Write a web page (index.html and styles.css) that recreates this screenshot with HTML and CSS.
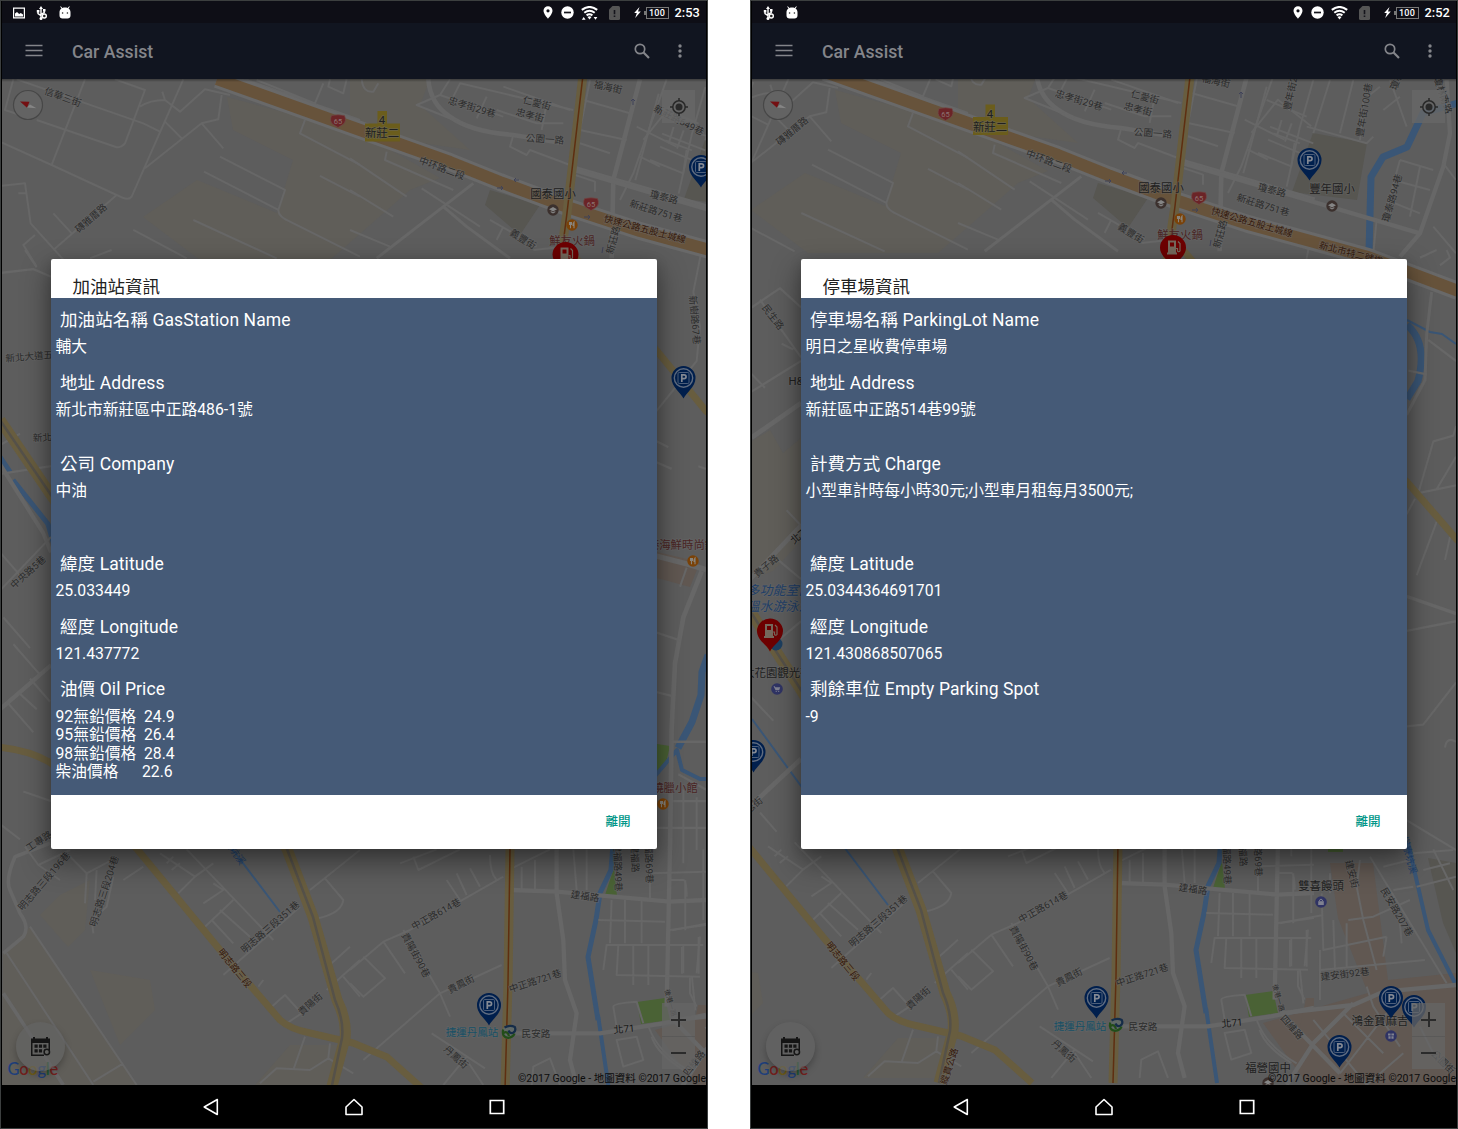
FILE: index.html
```html
<!DOCTYPE html>
<html lang="zh-Hant">
<head>
<meta charset="utf-8">
<title>Car Assist</title>
<link rel="stylesheet" href="styles.css">
</head>
<body>
<svg class="sprites" aria-hidden="true">
  <symbol id="i-image" viewBox="0 0 12 12"><path fill="#fff" fill-rule="evenodd" d="M0 .5h12v11H0zM1.2 1.7v8.6h9.6V1.7zM2 9.6V6.6l2-1.6 2.2 2 1.6-.9 2.2 1.4v2.1z"/></symbol>
  <symbol id="i-usb" viewBox="0 0 12 14"><g fill="none" stroke="#fff" stroke-width="1.4"><path d="M5 2v10M2 5.5v2.2l3 2M8.2 4v2.6L5 8.4"/><circle cx="8.3" cy="10" r="2" fill="#222"/></g><path fill="#fff" d="M5 0l2 3H3zM.8 4h2.6v2.4H.8zM7 3h2.5v2.4H7z"/><circle cx="5" cy="12.4" r="1.5" fill="#fff"/></symbol>
  <symbol id="i-android" viewBox="0 0 12 13"><path fill="#fff" d="M1.8.2l1.6 1.7C4.200 1.500 5 1.400 6 1.400s1.800.1 2.600.5L10.200.2l.6.5-1.300 1.800C11 3.400 11.500 4.700 11.500 6.500v3c0 1.800-1.200 3-3 3h-5c-1.800 0-3-1.200-3-3v-3c0-1.800.5-3.100 2-4L1.200.7z"/><circle cx="3.600" cy="7" r=".8" fill="#222"/><circle cx="8.400" cy="7" r=".8" fill="#222"/></symbol>
  <symbol id="i-place" viewBox="0 0 10 13"><path fill="#fff" fill-rule="evenodd" d="M5 .3A4.500 4.500 0 0 0 .5 4.800C.5 8 5 12.700 5 12.700S9.500 8 9.500 4.800A4.500 4.500 0 0 0 5 .3zM5 3.200a1.600 1.600 0 1 1 0 3.200 1.600 1.600 0 0 1 0-3.200z"/></symbol>
  <symbol id="i-dnd" viewBox="0 0 13 13"><circle cx="6.500" cy="6.500" r="6.200" fill="#fff"/><path d="M3 6.500h7" stroke="#15151c" stroke-width="1.700"/></symbol>
  <symbol id="i-wifi" viewBox="0 0 17 14"><g fill="none" stroke="#fff" stroke-width="2"><path d="M.8 3.900Q8.500-2 16.200 3.900M3.300 6.800Q8.500 2.600 13.700 6.800M5.600 9.400Q8.500 7.200 11.400 9.400"/></g><path fill="#fff" d="M6.500 11q2-1.500 4 0l-2 2.500z"/></symbol>
  <symbol id="i-traffic" viewBox="0 0 17 4"><path fill="#fff" d="M.8 3.800L2.700 1l1.900 2.800zM12.600 1h3.800l-1.900 2.800z"/></symbol>
  <symbol id="i-sim" viewBox="0 0 11 14"><path fill="#555" d="M3.500 0H9.500Q11 0 11 1.500V12.500Q11 14 9.500 14h-8Q0 14 0 12.500V3.500z"/><path stroke="#15151c" stroke-width="1.600" d="M5.500 4v4.200M5.500 9.500v1.600"/></symbol>
  <symbol id="i-bolt" viewBox="0 0 7 11"><path fill="#fff" d="M5.500 0L.2 6h2.600L1.200 11 6.800 4.600H4z"/></symbol>
  <symbol id="i-menu" viewBox="0 0 18 14"><path stroke="#84858a" stroke-width="1.500" d="M.5 1.500h17M.5 6.500h17M.5 11.500h17"/></symbol>
  <symbol id="i-search" viewBox="0 0 16 16"><circle cx="6" cy="6" r="4.700" fill="none" stroke="#84858a" stroke-width="1.700"/><path stroke="#84858a" stroke-width="2.200" d="M9.300 9.300l5.700 5.700"/></symbol>
  <symbol id="i-more" viewBox="0 0 4 16"><g fill="#84858a"><circle cx="2" cy="3" r="1.700"/><circle cx="2" cy="8" r="1.700"/><circle cx="2" cy="13" r="1.700"/></g></symbol>
  <symbol id="i-back" viewBox="0 0 20 20"><path fill="none" stroke="#fff" stroke-width="1.600" stroke-linejoin="round" d="M16.300 2.500v15L3.200 10z"/></symbol>
  <symbol id="i-home" viewBox="0 0 20 20"><path fill="none" stroke="#fff" stroke-width="1.600" stroke-linejoin="round" d="M2 17.500V10l8-7.500 8 7.500v7.500z"/></symbol>
  <symbol id="i-recent" viewBox="0 0 20 20"><path fill="none" stroke="#fff" stroke-width="1.700" d="M3.300 3.500h13.400v13H3.300z"/></symbol>
  <symbol id="i-compass" viewBox="0 0 32 32"><circle cx="16" cy="16" r="14.500" fill="#636363" stroke="#474747" stroke-width="1.200"/><path fill="#740f12" d="M8 12.500l9.500.2-2.500 6z"/><path fill="#858585" d="M15 18.500l3-3 6.500 3.800z"/></symbol>
  <symbol id="i-locate" viewBox="0 0 20 20"><circle cx="10" cy="10" r="6.200" fill="none" stroke="#292929" stroke-width="1.500"/><circle cx="10" cy="10" r="3.500" fill="#292929"/><path stroke="#292929" stroke-width="1.500" d="M10 1v3M10 16v3M1 10h3M16 10h3"/></symbol>
  <symbol id="i-calendar" viewBox="0 0 20 19"><path fill="#151515" fill-rule="evenodd" d="M0 1.500h2V0h2v1.500h11V0h2v1.500h2V13h-1.500V6h-16v11.500H13V19H0z"/><path fill="#151515" d="M3.500 7.500h3.200v3.200H3.500zM7.900 7.500h3.200v3.200H7.900zM12.300 7.500h3.200v3.200h-3.200zM3.500 12.200h3.200v3.200H3.500zM7.900 12.200h3.200v3.200H7.900z"/><circle cx="15.800" cy="15" r="2.700" fill="none" stroke="#151515" stroke-width="1.500"/></symbol>

  <symbol id="pin-parking" viewBox="-13 -13 26 34" overflow="visible"><path fill="#001f4d" d="M0 20.500C-2.500 15-12 9-12 0A12 12 0 0 1 12 0C12 9 2.500 15 0 20.500z"/><circle r="9.200" fill="none" stroke="#5f6c80" stroke-width="1.400"/><rect x="-5.500" y="-5.500" width="11" height="11" rx="1.200" fill="#00204e" stroke="#566680" stroke-width=".9"/><path fill="none" stroke="#858a94" stroke-width="1.700" d="M-1.700 4V-3.200H.6a1.900 1.900 0 0 1 0 3.900H-1.700"/></symbol>
  <symbol id="pin-gas" viewBox="-13 -13 26 34" overflow="visible"><path fill="#6d0000" d="M0 20.500C-2.500 14-13 9.500-13 0A13 12.500 0 0 1 13 0C13 9.500 2.500 14 0 20.500z"/><path fill="#75695c" fill-rule="evenodd" d="M-5-7H3V5h1v2H-6V5h1zM-3-5v4H1v-4z"/><path fill="none" stroke="#75695c" stroke-width="1.200" d="M3 1h1.500v2.500q1.500 1.500 2.500 0V-4L5-6"/></symbol>
  <symbol id="poi-food" viewBox="-6 -6 12 12" overflow="visible"><circle r="5.700" fill="#7a4208"/><path fill="none" stroke="#89857d" stroke-width="1.100" d="M-2.500-3v2.500h2V-3M-1.500-3v6.200M2 3.200V-3Q.8-1.500 1 .5h1"/></symbol>
  <symbol id="poi-school" viewBox="-6 -6 12 12" overflow="visible"><circle r="5.700" fill="#3b302d"/><path fill="#858585" d="M-4-.8L0-3l4 2.200L0 1.400zM-2.300 1L0 2.200 2.300 1v1.300L0 3.400-2.300 2.300z"/></symbol>
  <symbol id="poi-shop" viewBox="-6 -6 12 12" overflow="visible"><circle r="5.800" fill="#2f3364"/><path fill="#7f8190" d="M-2.800-.8h5.600V3h-5.600z"/><path fill="none" stroke="#7f8190" d="M-1.400-1v-1q1.400-1.800 2.800 0v1"/></symbol>
  <symbol id="poi-cart" viewBox="-6 -6 12 12" overflow="visible"><circle r="5.800" fill="#2f3364"/><path fill="#7f8190" d="M-3.500-2.800h1.400l.4 1h4.900L2.200 1.300h-3.600zM-1.300 2h1v1h-1zM1.200 2h1v1h-1z"/></symbol>
  <symbol id="poi-gift" viewBox="-6 -6 12 12" overflow="visible"><circle r="5.800" fill="#2f3364"/><path fill="#7f8190" d="M-3-2.600h2.600v2H-3zM.4-2.600H3v2H.4zM-2.600.2h2.200v2.600h-2.200zM.4.2h2.200v2.600H.4z"/></symbol>
  <symbol id="poi-metro" viewBox="-8 -8 16 16" overflow="visible"><ellipse rx="7.300" ry="6.600" fill="#5f6866" transform="rotate(-25)"/><path fill="none" stroke="#224d19" stroke-width="2.200" d="M-5.800-2.500Q-7.500 5-1 5.800 4 5.500 5.500 1.500M-5.500 1Q-1.500-1.500 0 4"/><path fill="none" stroke="#152c48" stroke-width="2.200" d="M-4.500-4.500Q1-7.500 5.800-5 7.500-1 4 .8 1 2-.5-1.500"/></symbol>
  <symbol id="shield" viewBox="-8 -7 16 14" overflow="visible"><path fill="#6b2427" stroke="#704b48" stroke-width=".7" d="M-6.500-5.500Q0-7 6.500-5.500 9 0 5 3.500L0 6.500-5 3.500Q-9 0-6.500-5.500z"/></symbol>

  <symbol id="streets" viewBox="0 0 850 1100" overflow="visible">
    <rect width="850" height="1100" fill="#5d5d5d"/>
    <g fill="#605e59">
      <path d="M227 97L360 133 440 178 410 190 330 260H200L143 217 197 180 277 213 293 160 233 130z"/>
      <path d="M350 79H430L420 105 470 150 400 140 350 120z"/>
      <path d="M3 953L30 927 137 1085H2zM60 895L90 880 85 930 68 947 40 915zM90 970L150 980 155 1010 120 1045z"/>
      <path d="M144 448L162 437 175 460 193 445V548L165 578 144 586zM290 1045L340 1045 330 1085H255z"/>
    </g>
    <g fill="#575651">
      <path d="M705 140L759 150 749 207 684 199zM490 190L540 205 520 235 485 205z"/>
      <path d="M820 865L848 870V960L835 930z"/>
    </g>
    <g fill="#615852">
      <path d="M657 552L700 562 690 587 657 578zM722 870L765 870 780 987 848 980V1092H700L655 1030 760 1000 730 925z"/>
      <path d="M698 1005H706V1040L690 1045z"/>
    </g>
    <g fill="#4a6235"><path d="M637 1002L665 998 670 1020 641 1024zM605 895L614 868 617 896zM657 744L670 746 665 767 657 774zM720 852H735V859H720z"/></g>
    <g fill="none" stroke="#3a5676" stroke-linejoin="round">
      <path stroke-width="5" d="M0 457L10 472M13 480L48 524 56 552M613 845L611 870 600 893 596 920 588 957 598 1020"/>
      <path stroke-width="4" d="M598 1015L609 1090M655 776L677 750 682 770 700 779 708 779M800 850L820 937 847 990"/>
      <path stroke-width="2" d="M144 726L193 793 233 850 280 912M799 327L822 339 834 341 848 351"/>
      <path stroke-width="7" d="M850 110L815 120 799 154 775 164 763 184 761 259M708 655L702 672 701 695 692 722 678 748M799 332Q820 350 810 388L799 406"/>
    </g>
    <g fill="none" stroke="#676767" stroke-width="6" stroke-linejoin="round">
      <g transform="scale(.3333)">
        <path d="M40 238L15 330 60 345M50 238L430 370 480 395M255 238L155 495M0 425L155 495 350 585Q385 605 395 590L550 238M110 360L350 442Q365 442 375 430L435 270 345 238M420 320Q450 300 495 300L540 335 615 268 690 285M487 275L495 300M665 285L655 358 605 370 435 505M605 370L670 445M495 365L545 415M0 558L75 550 92 670 200 790M160 750L350 585M160 640L215 700M105 705L70 735 110 800M55 580H80M270 775L335 750"/>
        <path d="M660 470L855 570 835 630Q835 650 870 665L1080 770M612 515L835 630M580 660L830 775M400 690L560 775M960 528L1080 590M915 360L900 400 1080 495M770 240L945 310 970 250M735 238L1080 360M990 238L985 260 1030 280 1040 238"/>
      </g>
      <g transform="translate(350) scale(.3333)">
        <path stroke-width="14" d="M235 238Q240 310 300 350 360 395 490 405L640 430M660 500L1070 620M870 238L790 540 785 775"/>
        <path d="M270 285L200 315 350 375M270 285L300 238M270 285L460 350M380 355L410 290M460 260L660 330M440 330L560 370 640 370M575 390L590 310M490 405L480 440 530 465 540 450 660 495M690 430L780 460M720 240L690 390 830 420M700 300L840 340M950 238L850 520 810 600M900 480L1000 520 1010 450M930 440L1050 490M870 470L930 500M880 420L960 320 1060 400M860 380L980 440M310 290L330 250 670 330M35 238Q40 280 70 275L85 250M0 475L170 590M110 455L105 480 310 570M420 660L560 740M440 720L460 680M0 570L130 650M0 690L120 740M215 565L390 680M660 520L735 545V575M550 750L640 740"/>
        <path stroke-width="9" d="M370 550L280 620 80 775M280 620L350 680 480 775"/>
      </g>
      <g transform="translate(492 7) scale(.3333)">
        <path stroke-width="13" d="M250 490L960 700M1040 240L1050 400 1030 500 960 700 900 770"/>
        <path d="M430 520L500 260M500 300L620 350M520 400L600 430M510 380L640 430M620 380L800 430 820 410M640 240L600 380 560 560M690 240L640 400M760 240L720 400M840 260L790 300 780 420M900 480L850 660M900 480L1000 510M880 540L990 570M860 600L960 640M960 500L930 650M1030 490L1068 540M830 660L820 760M870 240L920 380M900 290L850 330M545 360L530 410M575 370L555 425M1000 680L1068 760"/>
      </g>
      <g transform="translate(0 840) scale(.3333)">
        <path stroke-width="11" d="M10 340L70 290Q90 260 60 220L30 150Q15 120 45 50L150 10M10 460L190 735"/>
        <path d="M20 340L280 735M90 260L410 735M280 725L370 670M200 40L260 100 255 190M260 100L345 55M290 90L285 180M370 120L430 80M340 110L320 200 275 240 280 280M115 75L180 120M75 20L115 75 210 30M560 28L820 300M480 40L585 110 535 160M585 110L640 70M640 130L670 150 610 190M700 180L615 260M660 210L750 290M635 240L700 310M670 405L900 200M775 440L790 420M815 500L855 465 905 520 860 550M930 150L1080 30M975 115L1030 180Q1025 220 955 235M995 370L1050 320M980 450L1080 360M1030 410L1080 470M915 590L880 690M780 730L830 685 930 690 985 655 990 610M985 655L1060 700M500 70L520 50M515 90L540 70"/>
      </g>
      <g transform="translate(350 840) scale(.3333)">
        <path stroke-width="13" d="M485 150L620 155 960 185 1068 180M620 28L620 160 640 300 645 420 680 520 660 660 680 735M485 580L750 580 940 550 1068 525M960 28L950 500"/>
        <path d="M0 390L100 305 180 270 460 110M150 70L260 28M190 50L205 90 330 28M290 120L330 180M320 100L350 165M360 85L390 140M420 45Q420 100 440 120M485 85L600 28M515 80V150M555 60V150M100 305L165 400M40 350L105 415 40 470 0 430M160 270L270 460 300 530M455 375L270 460 40 660M245 580L405 685M350 650L280 735M350 660L400 735M745 240L945 245M785 180L780 310M825 180V310M875 180V310M760 390L770 315 1060 315M805 315L800 405 1050 410M850 315V435M895 315V435M960 270L1068 255M1000 315V400M1050 290L1040 400M1020 410L1020 460 1040 500M900 100L1068 95M900 28V180M960 120H1000Q1010 120 1010 170M1060 28V240M790 500Q790 490 860 485L880 550M790 500L800 560M800 600L860 590 880 660 820 680ZM545 735L550 680 600 655 630 735M905 590Q920 640 1000 690M670 28L680 150M710 28V150M1000 70V28"/>
      </g>
      <g transform="translate(492 847) scale(.3333)">
        <path stroke-width="13" d="M540 520L760 495 850 455 1068 435M760 490L640 610 560 735M545 520L720 700"/>
        <path d="M665 160L670 330 860 290M540 250L670 225M745 240L820 230 930 180M700 240L705 390M740 250V380M780 60L770 140 790 240 830 390M660 390L975 360M810 50L1040 430M850 80L930 60M470 540Q500 620 590 670M600 390L610 490M660 330V480M800 440L820 500 900 620M730 520L850 640M860 520L720 700M640 540L800 735M910 640L800 735M960 560L1000 640M860 290L850 350M900 250L905 310M1068 110L950 140M1000 28L1060 150M940 40L1060 30M970 90L1050 70M880 150L940 140M690 100V160M580 100V250M620 270V380M570 300V380"/>
      </g>
      <g transform="translate(42 257) scale(.3333 .3827)">
        <path stroke-width="13" d="M305 490L453 400M300 860L453 720M305 1450L453 1330"/>
        <path d="M305 150L390 100 453 150M305 370L453 290M330 130L453 280M300 320L345 360M395 245L430 260M305 1170L370 1230M330 1470L380 1520M410 680L453 720M385 810L453 860M385 1020L453 970"/>
      </g>
      <g transform="translate(792 257) scale(.3333 .3827)">
        <path stroke-width="9" d="M95 110L80 220 75 340 20 430M20 905L168 950"/>
        <path d="M85 235L168 290M55 635L100 500 160 485 168 460M55 635L168 615M110 625L168 540M45 650L20 690M110 710L50 850M150 750L135 810M20 995L168 970M20 1245L70 1240 168 1130M135 1300Q140 1270 168 1285M20 1490L168 1568M25 315L80 325M60 20L110 0M120 40L150 20 140 0"/>
      </g>
      <g transform="translate(0 250) scale(.3333 .3827)">
        <path stroke-width="12" d="M0 1200L153 1085M0 560L130 740 153 790"/>
        <path d="M0 60L100 50 153 70M75 0L110 45M0 510L60 480M0 585L153 565M0 790L60 850M10 960L90 1040M0 890L153 750M40 1030L120 1110M20 1180L100 1260M60 1160L110 1200M70 1415L153 1440M0 1500L60 1540M90 1120L150 1180"/>
      </g>
      <g transform="translate(650 250) scale(.3333 .3827)">
        <path stroke-width="14" d="M20 800L110 820 168 835M155 840L100 960 75 1080 65 1250 60 1568"/>
        <path d="M155 0L130 110 150 200 140 290 20 420M20 500L55 515M20 555L65 572M145 565L168 572M90 880L110 830M20 1000L90 1020M20 1155L65 1165M65 1285H168M85 1370L168 1410M70 1440H168M140 1430V1568M100 1410V1568M20 1510H168"/>
      </g>
    </g>
    <g fill="none" stroke-linejoin="round">
      <path stroke="#696969" stroke-width="18" d="M217 79L360 130 450 162 500 182 567 207 640 231 706 249 760 264 850 298"/>
      <path stroke="#67533b" stroke-width="12" d="M217 79L360 130 450 162 500 182 567 207 640 231 706 249 760 264 850 298"/>
      <g stroke="#685d3f">
        <path stroke-width="7" d="M560 240L657 351 706 411 799 489 850 548M-2 747Q30 750 51 763L137 849 220 950 280 1020Q290 1029 310 1033L353 1043 387 1057 424 1090"/>
        <path stroke-width="11" d="M0 420L51 495 144 621 193 697 287 849 313 917 337 1000Q347 1020 345 1038L331 1090"/>
        <path stroke-width="9" d="M583 75L567 213 560 260 515 700 510 849 508 983 505 1090"/>
      </g>
      <path stroke="#555149" stroke-width="2.500" d="M0 420L51 495 144 621 193 697 287 849 313 917 335 1000Q344 1020 342 1038L331 1090"/>
      <path stroke="#5e2e10" stroke-width="1.500" d="M583 75L567 213 561 260 515 700 510 849 508 983 505 1090"/>
    </g>
    <g fill="none" stroke="#3f4259" stroke-width="1"><path d="M514 180h5m-5 0l2-2m-2 2l2 2M497 188h6m-2-2l2 2-2 2M584 217h6m-2-2l2 2-2 2M633 105v-6m-2 2l2-2 2 2M602 253l1-6"/></g>
  </symbol>
</svg>

<main class="board">
  <section class="phone">
    <header class="status">
      <div class="notices"><svg class="n-image"><use href="#i-image"/></svg><svg class="n-usb"><use href="#i-usb"/></svg><svg class="n-android"><use href="#i-android"/></svg></div>
      <div class="system"><svg class="s-place"><use href="#i-place"/></svg><svg class="s-dnd"><use href="#i-dnd"/></svg><span class="s-wifi"><svg><use href="#i-wifi"/></svg><svg class="traffic"><use href="#i-traffic"/></svg></span><svg class="s-sim"><use href="#i-sim"/></svg><svg class="s-bolt"><use href="#i-bolt"/></svg><span class="battery">100</span><span class="clock">2:53</span></div>
    </header>
    <nav class="toolbar"><svg class="t-menu"><use href="#i-menu"/></svg><h1>Car Assist</h1><svg class="t-search"><use href="#i-search"/></svg><svg class="t-more"><use href="#i-more"/></svg></nav>
    <div class="stage">
      <svg class="map" viewBox="2 79 704 1006">
        <use href="#streets" width="850" height="1100"/>
        <path fill="#6b5d1c" d="M377.500 111h9.500v13h-9.500zM365 123.500h35v18h-35z"/>
        <use href="#shield" x="330" y="114" width="16" height="14"/><use href="#shield" x="583" y="197" width="16" height="14"/>
        <g class="street">
          <text transform="translate(63 97) rotate(20)">信華三街</text>
          <text transform="translate(91 218) rotate(-41)">磚雅厝路</text>
          <text transform="translate(472 107) rotate(17)">忠孝街29巷</text>
          <text transform="translate(537 103) rotate(15)">仁愛街</text>
          <text transform="translate(530 115) rotate(15)">忠孝街</text>
          <text transform="translate(545 139) rotate(4)">公園一路</text>
          <text transform="translate(608 87) rotate(12)">福海街</text>
          <text transform="translate(679 120) rotate(27)">新莊路649巷</text>
          <text transform="translate(442 168) rotate(20)">中环路二段</text>
          <text transform="translate(523 239) rotate(32)">義豐街</text>
          <text transform="translate(664 197) rotate(15)">瓊泰路</text>
          <text transform="translate(656 211) rotate(17)">新莊路751巷</text>
          <text transform="translate(613 240) rotate(-75)">新莊路</text>
          <text transform="translate(695 320) rotate(85)">新樹路67巷</text>
          <text transform="translate(34 356) rotate(-5)">新北大道五段</text>
          <text transform="translate(52 437) rotate(-3)">新北大道</text>
          <text transform="translate(28 572) rotate(-42)">中央路5巷</text>
          <text transform="translate(39 841) rotate(-33)">工專路</text>
          <text transform="translate(44 881) rotate(-49)">明志路三段196巷</text>
          <text transform="translate(104 891) rotate(-72)">明志路三段204巷</text>
          <text transform="translate(270 927) rotate(-41)">明志路三段351巷</text>
          <text transform="translate(310 1004) rotate(-42)">貴陽街</text>
          <text transform="translate(436 914) rotate(-29)">中正路614巷</text>
          <text transform="translate(416 955) rotate(62)">貴陽街90巷</text>
          <text transform="translate(461 984) rotate(-27)">貴鳳街</text>
          <text transform="translate(535 981) rotate(-18)">中正路721巷</text>
          <text transform="translate(536 1033)">民安路</text>
          <text transform="translate(456 1057) rotate(42)">丹鳳街</text>
          <text transform="translate(585 896) rotate(8)">建福路</text>
          <text transform="translate(618 867) rotate(88)">建福路49巷</text>
          <text transform="translate(635 858) rotate(88)">建福路</text>
          <text transform="translate(649 859) rotate(88)">建福路69巷</text>
          <text transform="translate(670 1003) rotate(75)" class="tiny">後港一路</text>
          <text transform="translate(694 1063) rotate(-52)">四維路</text>
          <text transform="translate(624 1029) rotate(-5)" class="dark">北71</text>
          <text transform="translate(645 229) rotate(15)" class="brown">快速公路五股土城線</text>
          <text transform="translate(235 968) rotate(51)" class="brown">明志路三段</text>
          <text transform="translate(232 848) rotate(55)" class="water">大窠坑溪</text>
        </g>
        <g class="place">
          <text x="553" y="194">國泰國小</text>
          <text x="572" y="241" class="red">鮮友火鍋</text>
          <text x="682" y="545" class="red">港海鮮時尚鍋</text>
          <text x="675" y="788" class="red">燒臘小館</text>
          <text x="472" y="1032" class="metro">捷運丹鳳站</text>
          <text x="382" y="120">4</text><text x="382" y="133">新莊二</text>
          <text x="338" y="121" class="route">65</text><text x="591" y="204" class="route">65</text>
        </g>
        <use href="#poi-school" x="547" y="204" width="12" height="12"/>
        <use href="#poi-food" x="566" y="219" width="12" height="12"/>
        <use href="#poi-food" x="687" y="555" width="12" height="12"/>
        <use href="#poi-food" x="657" y="798" width="12" height="12"/>
        <use href="#poi-metro" x="501" y="1024" width="16" height="16"/>
        <use href="#pin-parking" x="688" y="154" width="26" height="34"/>
        <use href="#pin-parking" x="670.500" y="365" width="26" height="34"/>
        <use href="#pin-parking" x="476" y="992" width="26" height="34"/>
        <use href="#pin-gas" x="552.500" y="241.500" width="26" height="34"/>
      </svg>
      <svg class="compass"><use href="#i-compass"/></svg>
      <div class="locate"><svg><use href="#i-locate"/></svg></div>
      <div class="google"><b>G</b><b>o</b><b>o</b><b>g</b><b>l</b><b>e</b></div>
      <div class="fab"><svg><use href="#i-calendar"/></svg></div>
      <div class="zoom"><span class="plus"></span><span class="minus"></span></div>
      <p class="credit">©2017 Google - 地圖資料 ©2017 Google</p>
      <article class="dialog">
        <h2>加油站資訊</h2>
        <dl>
          <div><dt>加油站名稱 GasStation Name</dt><dd>輔大</dd></div>
          <div><dt>地址 Address</dt><dd class="two">新北市新莊區中正路486-1號</dd></div>
          <div><dt>公司 Company</dt><dd class="three">中油</dd></div>
          <div><dt>緯度 Latitude</dt><dd>25.033449</dd></div>
          <div><dt>經度 Longitude</dt><dd>121.437772</dd></div>
          <div><dt>油價 Oil Price</dt><dd>92無鉛價格  24.9
95無鉛價格  26.4
98無鉛價格  28.4
柴油價格      22.6</dd></div>
        </dl>
        <footer><button>離開</button></footer>
      </article>
    </div>
    <footer class="keys"><svg><use href="#i-back"/></svg><svg><use href="#i-home"/></svg><svg><use href="#i-recent"/></svg></footer>
  </section>

  <section class="phone">
    <header class="status">
      <div class="notices"><svg class="n-usb"><use href="#i-usb"/></svg><svg class="n-android"><use href="#i-android"/></svg></div>
      <div class="system"><svg class="s-place"><use href="#i-place"/></svg><svg class="s-dnd"><use href="#i-dnd"/></svg><span class="s-wifi"><svg><use href="#i-wifi"/></svg></span><svg class="s-sim"><use href="#i-sim"/></svg><svg class="s-bolt"><use href="#i-bolt"/></svg><span class="battery">100</span><span class="clock">2:52</span></div>
    </header>
    <nav class="toolbar"><svg class="t-menu"><use href="#i-menu"/></svg><h1>Car Assist</h1><svg class="t-search"><use href="#i-search"/></svg><svg class="t-more"><use href="#i-more"/></svg></nav>
    <div class="stage">
      <svg class="map" viewBox="752 79 704 1006">
        <use href="#streets" x="608" y="-7" width="850" height="1100"/>
        <path fill="#6b5d1c" d="M985.500 104.500h9.500v13h-9.500zM973 117h35v18h-35z"/>
        <use href="#shield" x="937.500" y="107" width="16" height="14"/><use href="#shield" x="1191" y="191" width="16" height="14"/>
        <g class="street">
          <text transform="translate(792 131) rotate(-40)">磚雅厝路</text>
          <text transform="translate(1079 100) rotate(17)">忠孝街29巷</text>
          <text transform="translate(1145 97) rotate(15)">仁愛街</text>
          <text transform="translate(1138 109) rotate(15)">忠孝街</text>
          <text transform="translate(1153 133) rotate(4)">公園一路</text>
          <text transform="translate(1216 81) rotate(12)">福海街</text>
          <text transform="translate(1049 161) rotate(20)">中环路二段</text>
          <text transform="translate(1291 91) rotate(-78)">豐年街28</text>
          <text transform="translate(1364 110) rotate(-80)">豐年街100巷</text>
          <text transform="translate(1398 76) rotate(-70)">瓊林路</text>
          <text transform="translate(1443 95) rotate(72)">瓊林南路</text>
          <text transform="translate(1131 233) rotate(32)">義豐街</text>
          <text transform="translate(1272 190) rotate(15)">瓊泰路</text>
          <text transform="translate(1263 205) rotate(17)">新莊路751巷</text>
          <text transform="translate(1220 234) rotate(-75)">新莊路</text>
          <text transform="translate(1392 198) rotate(-74)">瓊泰路94巷</text>
          <text transform="translate(773 317) rotate(52)">民生路</text>
          <text transform="translate(766 566) rotate(-40)">貴子路</text>
          <text transform="translate(750 808) rotate(-40)">明志街</text>
          <text transform="translate(878 921) rotate(-41)">明志路三段351巷</text>
          <text transform="translate(918 998) rotate(-42)">貴陽街</text>
          <text transform="translate(1043 907) rotate(-29)">中正路614巷</text>
          <text transform="translate(1024 948) rotate(62)">貴陽街90巷</text>
          <text transform="translate(1069 977) rotate(-27)">貴鳳街</text>
          <text transform="translate(1142 975) rotate(-18)">中正路721巷</text>
          <text transform="translate(1143 1026)">民安路</text>
          <text transform="translate(1064 1051) rotate(42)">丹鳳街</text>
          <text transform="translate(1193 889) rotate(8)">建福路</text>
          <text transform="translate(1227 860) rotate(88)">建福路49巷</text>
          <text transform="translate(1243 852) rotate(88)">建福路</text>
          <text transform="translate(1258 852) rotate(88)">建福路69巷</text>
          <text transform="translate(1352 874) rotate(75)">建安街</text>
          <text transform="translate(1397 912) rotate(60)">民安路207巷</text>
          <text transform="translate(1345 974) rotate(-7)">建安街92巷</text>
          <text transform="translate(1292 1027) rotate(48)">四維路</text>
          <text transform="translate(1278 998) rotate(75)" class="tiny">後港一路</text>
          <text transform="translate(1443 1062) rotate(45)">公園街</text>
          <text transform="translate(1232 1023) rotate(-5)" class="dark">北71</text>
          <text transform="translate(800 535) rotate(-40)" class="dark">北71</text>
          <text transform="translate(1252 222) rotate(16)" class="brown">快速公路五股土城線</text>
          <text transform="translate(1351 253) rotate(15)" class="brown">新北市特二號道</text>
          <text transform="translate(843 961) rotate(51)" class="brown">明志路三段</text>
          <text transform="translate(949 1066) rotate(-72)" class="brown">縱貫公路</text>
          <text transform="translate(1409 855) rotate(75)" class="water">塔寮坑溪</text>
        </g>
        <g class="place">
          <text x="1161" y="188">國泰國小</text>
          <text x="1332" y="189">豐年國小</text>
          <text x="1180" y="235" class="red">鮮友火鍋</text>
          <text x="801" y="381">H&amp;M</text>
          <text x="779" y="590" class="pool">多功能室內</text>
          <text x="779" y="606" class="pool">溫水游泳池</text>
          <text x="783" y="673">大花園觀光夜市</text>
          <text x="1321" y="886">雙喜饅頭</text>
          <text x="1380" y="1021">鴻金寶麻吉</text>
          <text x="1268" y="1068">福營國中</text>
          <text x="1080" y="1026" class="metro">捷運丹鳳站</text>
          <text x="990" y="113.500">4</text><text x="990" y="127">新莊二</text>
          <text x="945.500" y="114" class="route">65</text><text x="1199" y="198" class="route">65</text>
        </g>
        <circle cx="776" cy="644" r="6.500" fill="#1d3f60"/>
        <use href="#poi-school" x="1155" y="197" width="12" height="12"/>
        <use href="#poi-school" x="1326" y="200" width="12" height="12"/>
        <use href="#poi-school" x="1262" y="1077" width="12" height="12"/>
        <use href="#poi-food" x="1174" y="213" width="12" height="12"/>
        <use href="#poi-cart" x="771" y="683" width="12" height="12"/>
        <use href="#poi-shop" x="1315" y="896" width="12" height="12"/>
        <use href="#poi-gift" x="1385" y="1030" width="12" height="12"/>
        <use href="#poi-metro" x="1108" y="1017" width="16" height="16"/>
        <use href="#pin-parking" x="1296.500" y="147" width="26" height="34"/>
        <use href="#pin-parking" x="740.500" y="739" width="26" height="34"/>
        <use href="#pin-parking" x="1083.500" y="985" width="26" height="34"/>
        <use href="#pin-parking" x="1378" y="985" width="26" height="34"/>
        <use href="#pin-parking" x="1401" y="994" width="26" height="34"/>
        <use href="#pin-parking" x="1326.500" y="1034" width="26" height="34"/>
        <use href="#pin-gas" x="1160" y="234.500" width="26" height="34"/>
        <use href="#pin-gas" x="757" y="618" width="26" height="34"/>
      </svg>
      <svg class="compass"><use href="#i-compass"/></svg>
      <div class="locate"><svg><use href="#i-locate"/></svg></div>
      <div class="google"><b>G</b><b>o</b><b>o</b><b>g</b><b>l</b><b>e</b></div>
      <div class="fab"><svg><use href="#i-calendar"/></svg></div>
      <div class="zoom"><span class="plus"></span><span class="minus"></span></div>
      <p class="credit">©2017 Google - 地圖資料 ©2017 Google</p>
      <article class="dialog">
        <h2>停車場資訊</h2>
        <dl>
          <div><dt>停車場名稱 ParkingLot Name</dt><dd>明日之星收費停車場</dd></div>
          <div><dt>地址 Address</dt><dd class="two">新莊區中正路514巷99號</dd></div>
          <div><dt>計費方式 Charge</dt><dd class="three">小型車計時每小時30元;小型車月租每月3500元;</dd></div>
          <div><dt>緯度 Latitude</dt><dd>25.0344364691701</dd></div>
          <div><dt>經度 Longitude</dt><dd>121.430868507065</dd></div>
          <div><dt>剩餘車位 Empty Parking Spot</dt><dd>-9</dd></div>
        </dl>
        <footer><button>離開</button></footer>
      </article>
    </div>
    <footer class="keys"><svg><use href="#i-back"/></svg><svg><use href="#i-home"/></svg><svg><use href="#i-recent"/></svg></footer>
  </section>
</main>
</body>
</html>
```
FILE: styles.css
```css
* { box-sizing: border-box; }
html, body { margin: 0; background: #fff; }
body { width: 1458px; height: 1129px; overflow: hidden; font-family: Roboto, "Noto Sans CJK TC", sans-serif; }
h1, h2, p, dl, dd { margin: 0; }
svg { display: block; }
.sprites { position: absolute; width: 0; height: 0; }

.board { display: flex; justify-content: space-between; height: 1129px; }
.phone { display: flex; flex-direction: column; width: 708px; height: 1129px; background: #000; border: 1px solid #3c3f3f; padding: 0 1px; }

.status { display: flex; justify-content: space-between; align-items: center; flex: 0 0 22px; background: #0e0e16; padding: 1px 7px 0 10.500px; color: #fff; }
.notices, .system { display: flex; align-items: center; }
.notices { gap: 11px; }
.n-image { width: 12px; height: 12px; }
.n-usb { width: 12px; height: 14px; }
.n-android { width: 12px; height: 13px; }
.s-place { width: 10px; height: 13px; }
.s-dnd { width: 13px; height: 13px; margin-left: 7.500px; }
.s-wifi { position: relative; width: 17px; height: 14px; margin-left: 7.500px; }
.s-wifi svg { width: 17px; height: 14px; }
.s-wifi .traffic { position: absolute; left: 0; bottom: 0; height: 4px; }
.s-sim { width: 11px; height: 14px; margin-left: 11px; }
.s-bolt { width: 7px; height: 11px; margin-left: 14px; }
.battery { position: relative; width: 23px; height: 12px; margin-left: 4.500px; border: 1px solid #777; font-size: 9px; font-weight: 500; line-height: 10px; text-align: center; letter-spacing: .2px; }
.battery::before { content: ""; position: absolute; left: -3px; top: 3px; width: 2px; height: 4px; background: #777; }
.clock { width: 24.500px; margin-left: 6px; font-size: 12.800px; font-weight: 500; line-height: 16px; white-space: nowrap; padding-top: 1px; }

.toolbar { display: flex; align-items: center; flex: 0 0 56px; background: #111520; padding: 0 24.500px 0 22.500px; }
.t-menu { width: 18px; height: 14px; }
.toolbar h1 { margin: 1px auto 0 29.500px; color: #84858a; font-size: 17.700px; font-weight: 500; line-height: 24px; }
.t-search { width: 16px; height: 16px; }
.t-more { width: 4px; height: 16px; margin-left: 27.500px; }

.stage { position: relative; flex: 0 0 1006px; overflow: hidden; }
.stage::before { content: ""; position: absolute; inset: 0 0 auto; height: 3px; background: linear-gradient(rgba(0, 0, 0, .35), transparent); }
.map { width: 704px; height: 1006px; }
.map text { text-anchor: middle; dominant-baseline: central; paint-order: stroke; stroke: rgba(104, 104, 104, .55); stroke-width: 1.500px; }
.street text { font-size: 9.600px; fill: #2c2c2c; }
.street .tiny { font-size: 7px; }
.street .dark { font-size: 10px; fill: #171717; }
.street .brown { fill: #35190c; font-size: 9.400px; }
.street .water { fill: #213f68; stroke: none; }
.place text { font-size: 11.400px; fill: #202020; }
.place .red { fill: #4a2524; }
.place .metro { fill: #165066; font-size: 10.500px; }
.place .route { fill: #8b7371; font-size: 7.500px; stroke: none; }
.place .pool { fill: #213f68; font-size: 13px; font-style: italic; }

.compass { position: absolute; left: 10px; top: 10px; width: 32px; height: 32px; }
.locate { position: absolute; left: 660px; top: 11px; width: 33px; height: 33px; background: rgba(104, 104, 104, .8); padding: 6.500px; }
.locate svg { width: 20px; height: 20px; }
.google { position: absolute; left: 5.500px; top: 980px; display: flex; font: 16.500px/20px Lato, sans-serif; letter-spacing: -.3px; }
.google b { font-weight: 500; color: #1f3f7a; }
.google b:nth-child(2), .google b:nth-child(6) { color: #74201c; }
.google b:nth-child(3) { color: #73601a; }
.google b:nth-child(5) { color: #1d5a30; }
.fab { position: absolute; left: 14px; top: 943px; width: 49px; height: 49px; border-radius: 50%; background: rgba(100, 100, 100, .65); box-shadow: 0 4px 7px rgba(0, 0, 0, .25); padding: 15px 0 0 15px; }
.fab svg { width: 20px; height: 19px; }
.zoom { position: absolute; left: 660px; top: 924px; width: 33px; height: 66px; display: grid; grid-template-rows: 1fr 1fr; place-items: center; background: linear-gradient(rgba(80, 80, 80, .5), rgba(80, 80, 80, .5)) 0 50% / 100% 1px no-repeat, rgba(102, 102, 102, .75); }
.plus, .minus { width: 15px; height: 15px; background: linear-gradient(#2b2b2b, #2b2b2b) 50% 50% / 15px 2px no-repeat; }
.plus { background: linear-gradient(#2b2b2b, #2b2b2b) 50% 50% / 15px 2px no-repeat, linear-gradient(#2b2b2b, #2b2b2b) 50% 50% / 2px 15px no-repeat; }
.credit { position: absolute; right: 0; bottom: -2px; color: #0c0c0c; font-size: 10.500px; line-height: 16px; white-space: nowrap; }

.dialog { position: absolute; left: 49px; top: 180px; width: 606px; height: 590px; display: flex; flex-direction: column; background: #fff; border-radius: 2px; overflow: hidden; box-shadow: 0 12px 28px 2px rgba(0, 0, 0, .4), 0 2px 12px rgba(0, 0, 0, .15); }
.dialog h2 { flex: 0 0 39px; padding: 17px 0 0 21.500px; color: #212121; font-size: 17.500px; font-weight: 400; line-height: 22px; }
.dialog dl { flex: 0 0 497px; background: #455a77; padding-top: 9px; color: #fff; }
.dialog dl div { padding-bottom: 13px; }
.dialog dt { padding-left: 9px; font-size: 17.500px; line-height: 26px; letter-spacing: .1px; }
.dialog dd { margin: 5.250px 0 0 4.500px; min-height: 18.500px; font-size: 15.750px; line-height: 18.500px; white-space: pre; }
.dialog .two { min-height: 37px; }
.dialog .three { min-height: 55.500px; }
.dialog footer { display: flex; flex: 1; align-items: center; justify-content: flex-end; padding-right: 26.500px; }
.dialog button { border: 0; padding: 0; background: none; color: #009688; font: 500 12.500px/20px Roboto, "Noto Sans CJK TC", sans-serif; }

.keys { display: flex; justify-content: center; align-items: center; gap: 123px; flex: 1; padding-top: 1px; }
.keys svg { width: 20px; height: 20px; }
```
